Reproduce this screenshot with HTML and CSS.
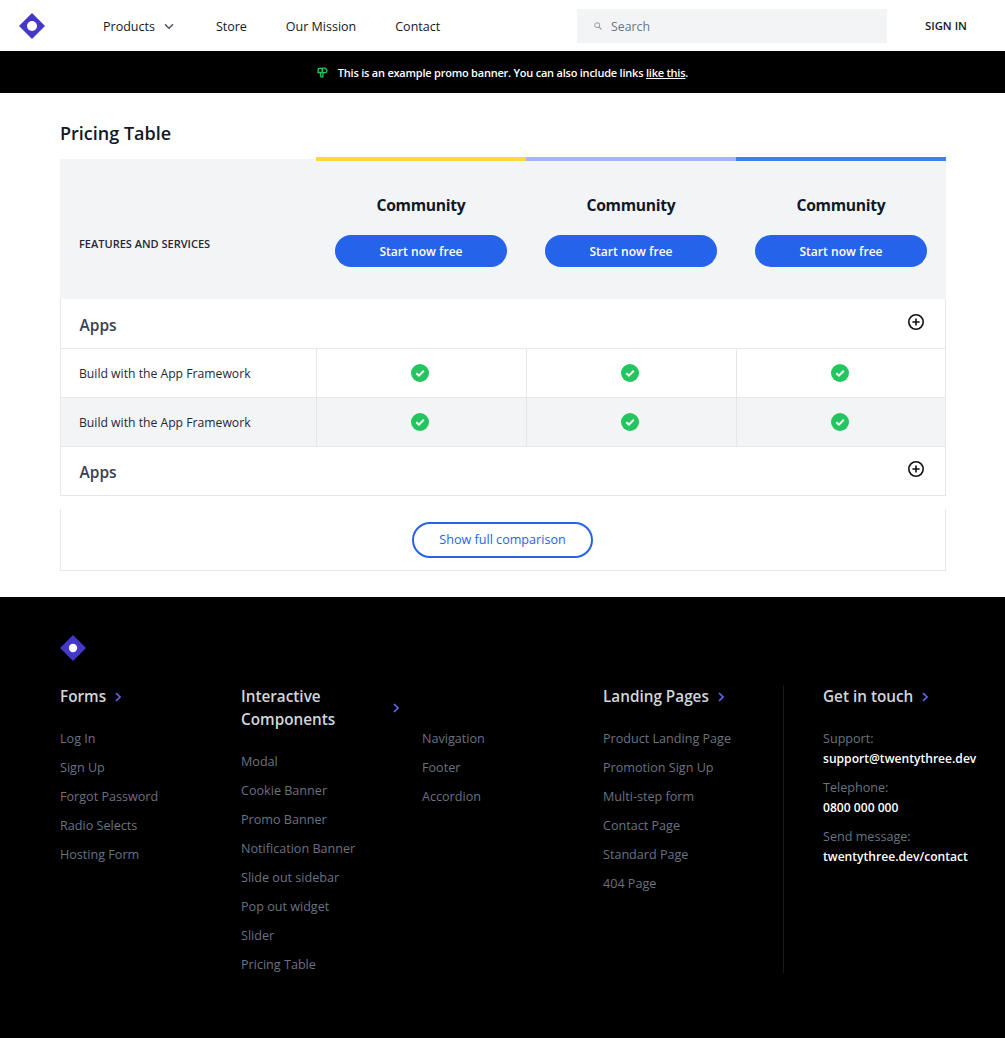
FILE: index.html
```html
<!DOCTYPE html>
<html lang="en">
<head>
<meta charset="utf-8">
<title>Pricing Table</title>
<link rel="stylesheet" href="styles.css">
</head>
<body>
<header class="topbar">
  <svg class="logo" viewBox="0 0 26 26" width="26" height="26"><path d="M13 0 26 13 13 26 0 13Z" fill="#4338ca"/><circle cx="13" cy="13" r="5" fill="#fff"/></svg>
  <nav class="nav">
    <a class="nav-link nav-products">Products
      <svg class="chev" viewBox="0 0 10 7" width="10" height="7"><path d="M1 1.2 5 5.2 9 1.2" fill="none" stroke="#4b5563" stroke-width="1.5"/></svg>
    </a>
    <a class="nav-link">Store</a>
    <a class="nav-link">Our Mission</a>
    <a class="nav-link">Contact</a>
  </nav>
  <div class="search">
    <svg viewBox="0 0 10 10" width="8" height="8"><circle cx="4" cy="4" r="3" fill="none" stroke="#9ca3af" stroke-width="1.3"/><path d="M6.3 6.3 9.5 9.5" stroke="#9ca3af" stroke-width="1.5"/></svg>
    <span>Search</span>
  </div>
  <a class="signin">SIGN IN</a>
</header>

<div class="promo">
  <svg viewBox="0 0 12 12" width="11" height="11"><path d="M1 6 1.6 1.6h3.8l.4 4.4ZM6 1.2h3l2 2.4-1.2 2.6H6ZM3.8 6 4.2 10.8 6.2 11 6.8 6.2" fill="none" stroke="#22c55e" stroke-width="1.4"/></svg>
  <p>This is an example promo banner. You can also include links <a class="promo-link">like this</a>.</p>
</div>

<main class="main">
  <h1 class="title">Pricing Table</h1>
  <div class="table">
    <div class="head">
      <div class="head-label">FEATURES AND SERVICES</div>
      <div class="plan plan-yellow"><h2>Community</h2><a class="btn">Start now free</a></div>
      <div class="plan plan-indigo"><h2>Community</h2><a class="btn">Start now free</a></div>
      <div class="plan plan-blue"><h2>Community</h2><a class="btn">Start now free</a></div>
    </div>
    <div class="group group-first"><span>Apps</span>
      <svg viewBox="0 0 18 18" width="18" height="18"><circle cx="9" cy="9" r="7.2" fill="none" stroke="#111" stroke-width="1.6"/><path d="M9 5.4v7.2M5.4 9h7.2" stroke="#111" stroke-width="1.6"/></svg>
    </div>
    <div class="row">
      <div class="feature">Build with the App Framework</div>
      <div class="cell"><svg class="tick" viewBox="0 0 18 18" width="18" height="18"><circle cx="9" cy="9" r="9" fill="#22c55e"/><path d="M5.3 9.2 7.9 11.6 12.8 6.8" fill="none" stroke="#fff" stroke-width="2"/></svg></div>
      <div class="cell"><svg class="tick" viewBox="0 0 18 18" width="18" height="18"><circle cx="9" cy="9" r="9" fill="#22c55e"/><path d="M5.3 9.2 7.9 11.6 12.8 6.8" fill="none" stroke="#fff" stroke-width="2"/></svg></div>
      <div class="cell"><svg class="tick" viewBox="0 0 18 18" width="18" height="18"><circle cx="9" cy="9" r="9" fill="#22c55e"/><path d="M5.3 9.2 7.9 11.6 12.8 6.8" fill="none" stroke="#fff" stroke-width="2"/></svg></div>
    </div>
    <div class="row row-alt">
      <div class="feature">Build with the App Framework</div>
      <div class="cell"><svg class="tick" viewBox="0 0 18 18" width="18" height="18"><circle cx="9" cy="9" r="9" fill="#22c55e"/><path d="M5.3 9.2 7.9 11.6 12.8 6.8" fill="none" stroke="#fff" stroke-width="2"/></svg></div>
      <div class="cell"><svg class="tick" viewBox="0 0 18 18" width="18" height="18"><circle cx="9" cy="9" r="9" fill="#22c55e"/><path d="M5.3 9.2 7.9 11.6 12.8 6.8" fill="none" stroke="#fff" stroke-width="2"/></svg></div>
      <div class="cell"><svg class="tick" viewBox="0 0 18 18" width="18" height="18"><circle cx="9" cy="9" r="9" fill="#22c55e"/><path d="M5.3 9.2 7.9 11.6 12.8 6.8" fill="none" stroke="#fff" stroke-width="2"/></svg></div>
    </div>
    <div class="group"><span>Apps</span>
      <svg viewBox="0 0 18 18" width="18" height="18"><circle cx="9" cy="9" r="7.2" fill="none" stroke="#111" stroke-width="1.6"/><path d="M9 5.4v7.2M5.4 9h7.2" stroke="#111" stroke-width="1.6"/></svg>
    </div>
  </div>
  <div class="more"><a class="btn-outline">Show full comparison</a></div>
</main>

<footer class="footer">
  <svg class="foot-logo" viewBox="0 0 26 26" width="26" height="26"><path d="M13 0 26 13 13 26 0 13Z" fill="#4338ca"/><circle cx="13" cy="13" r="4.2" fill="#fff"/></svg>
  <div class="foot-cols">
    <section class="col">
      <h3>Forms <svg class="arrow" viewBox="0 0 6 10" width="6" height="10"><path d="M1 1 5 5 1 9" fill="none" stroke="#6366f1" stroke-width="1.6"/></svg></h3>
      <ul><li>Log In</li><li>Sign Up</li><li>Forgot Password</li><li>Radio Selects</li><li>Hosting Form</li></ul>
    </section>
    <section class="col">
      <h3 class="h3-wrap"><span>Interactive Components</span> <svg class="arrow" viewBox="0 0 6 10" width="6" height="10"><path d="M1 1 5 5 1 9" fill="none" stroke="#6366f1" stroke-width="1.6"/></svg></h3>
      <ul><li>Modal</li><li>Cookie Banner</li><li>Promo Banner</li><li>Notification Banner</li><li>Slide out sidebar</li><li>Pop out widget</li><li>Slider</li><li>Pricing Table</li></ul>
    </section>
    <section class="col">
      <h3 class="h3-blank">&nbsp;</h3>
      <ul><li>Navigation</li><li>Footer</li><li>Accordion</li></ul>
    </section>
    <section class="col col-last">
      <h3>Landing Pages <svg class="arrow" viewBox="0 0 6 10" width="6" height="10"><path d="M1 1 5 5 1 9" fill="none" stroke="#6366f1" stroke-width="1.6"/></svg></h3>
      <ul><li>Product Landing Page</li><li>Promotion Sign Up</li><li>Multi-step form</li><li>Contact Page</li><li>Standard Page</li><li>404 Page</li></ul>
    </section>
    <section class="contact">
      <h3>Get in touch <svg class="arrow" viewBox="0 0 6 10" width="6" height="10"><path d="M1 1 5 5 1 9" fill="none" stroke="#6366f1" stroke-width="1.6"/></svg></h3>
      <dl>
        <dt>Support:</dt><dd>support@twentythree.dev</dd>
        <dt>Telephone:</dt><dd>0800 000 000</dd>
        <dt>Send message:</dt><dd>twentythree.dev/contact</dd>
      </dl>
    </section>
  </div>
</footer>
</body>
</html>
```
FILE: styles.css
```css
* { box-sizing: border-box; }
html, body { margin: 0; padding: 0; }
body { font-family: "Open Sans", "Noto Sans", sans-serif; background: #fff; color: #111827; font-size: 13px; }
p, h1, h2, h3, ul, dl, dt, dd { margin: 0; padding: 0; }
ul { list-style: none; }

.topbar { display: flex; align-items: center; height: 51px; padding: 0 39px 0 19px; }
.logo { flex: none; }
.nav { display: flex; align-items: center; gap: 39px; margin-left: 58px; flex: 1; padding-top: 2px; }
.nav-link { color: #111827; font-size: 12.5px; font-weight: 500; line-height: 20px; display: flex; align-items: center; white-space: nowrap; }
.nav-products { gap: 9px; margin-right: 3px; }
.search { flex: none; width: 310px; height: 34px; background: #f3f4f6; display: flex; align-items: center; gap: 9px; padding: 1px 0 0 17px; color: #6b7280; font-size: 12.3px; }
.signin { flex: none; margin-left: 38px; width: 41px; font-size: 11.3px; font-weight: 600; color: #111827; white-space: nowrap; }

.promo { height: 42px; background: #000; color: #fff; display: flex; align-items: center; justify-content: center; gap: 10px; font-size: 11px; letter-spacing: -0.22px; font-weight: 600; }
.promo-link { text-decoration: underline; }

.main { padding: 0 60px 26px 60px; }
.title { font-size: 18px; font-weight: 600; line-height: 28px; padding-top: 26px; padding-bottom: 12px; color: #111827; }
.table { width: 886px; }
.head { display: grid; grid-template-columns: 256px repeat(3, 210px); height: 140px; background: #f3f4f6; }
.head-label { align-self: center; padding: 28px 0 0 19px; font-size: 11px; font-weight: 600; color: #1f2937; }
.plan { position: relative; display: flex; flex-direction: column; align-items: center; padding-top: 34px; }
.plan::before { content: ""; position: absolute; left: 0; right: 0; top: -2px; height: 4px; }
.plan-yellow::before { background: #fcd93b; }
.plan-indigo::before { background: #a5b4fc; }
.plan-blue::before { background: #3b82f6; }
.plan h2 { font-size: 15.7px; font-weight: 700; letter-spacing: -0.3px; line-height: 24px; color: #111827; }
.btn { margin-top: 18px; width: 171.5px; height: 32px; border-radius: 16px; background: #2563eb; color: #fff; font-size: 12.1px; font-weight: 600; display: flex; align-items: center; justify-content: center; }

.group { height: 49px; display: flex; align-items: center; justify-content: space-between; padding: 0 20px 2px 18.5px; border: 1px solid #e5e7eb; border-top: 0; font-size: 15.5px; font-weight: 600; color: #374151; }
.group-first { height: 50px; padding-bottom: 1px; }
.group span { margin-top: 4px; }
.group svg { margin-top: -2px; }
.row { display: grid; grid-template-columns: 255px repeat(3, 210px); height: 49px; border-bottom: 1px solid #e5e7eb; border-left: 1px solid #e5e7eb; border-right: 1px solid #e5e7eb; }
.row-alt { background: #f3f4f6; }
.feature { display: flex; align-items: center; padding-left: 18px; font-size: 12.2px; font-weight: 500; color: #1f2937; }
.cell { display: flex; align-items: center; justify-content: center; border-left: 1px solid #e5e7eb; padding-right: 3px; }

.more { margin-top: 13px; width: 886px; height: 62px; display: flex; align-items: center; justify-content: center; border: 1px solid #e5e7eb; border-top: 0; padding-right: 1px; }
.btn-outline { width: 181px; height: 36px; border: 2px solid #2563eb; border-radius: 18px; color: #2563eb; font-size: 12.6px; font-weight: 500; display: flex; align-items: center; justify-content: center; }

.footer { background: #000; height: 441px; padding: 38px 0 0 60px; color: #6b7280; }
.foot-logo { display: block; margin-bottom: 24px; }
.foot-cols { display: flex; align-items: stretch; height: 288px; }
.col { width: 181px; padding-right: 20px; }
.col-last { width: 181px; border-right: 1px solid #111827; }
.col h3, .contact h3 { color: #d1d5db; font-size: 15.3px; font-weight: 600; line-height: 23px; }
.arrow { margin-left: 5px; }
.h3-wrap { display: flex; align-items: center; justify-content: space-between; padding-right: 3px; }
.h3-wrap span { width: 110px; }
.h3-blank { height: 23px; }
.col ul { margin-top: 21px; }
.col li { font-size: 12.6px; line-height: 20px; margin-bottom: 9px; color: #6b7280; font-weight: 500; }
.contact { padding-left: 39px; }
.contact dl { margin-top: 21px; }
.contact dt { font-size: 12.6px; line-height: 20px; color: #6b7280; font-weight: 500; }
.contact dd { font-size: 12.1px; line-height: 19px; color: #fff; font-weight: 600; margin-bottom: 10px; white-space: nowrap; }
```
